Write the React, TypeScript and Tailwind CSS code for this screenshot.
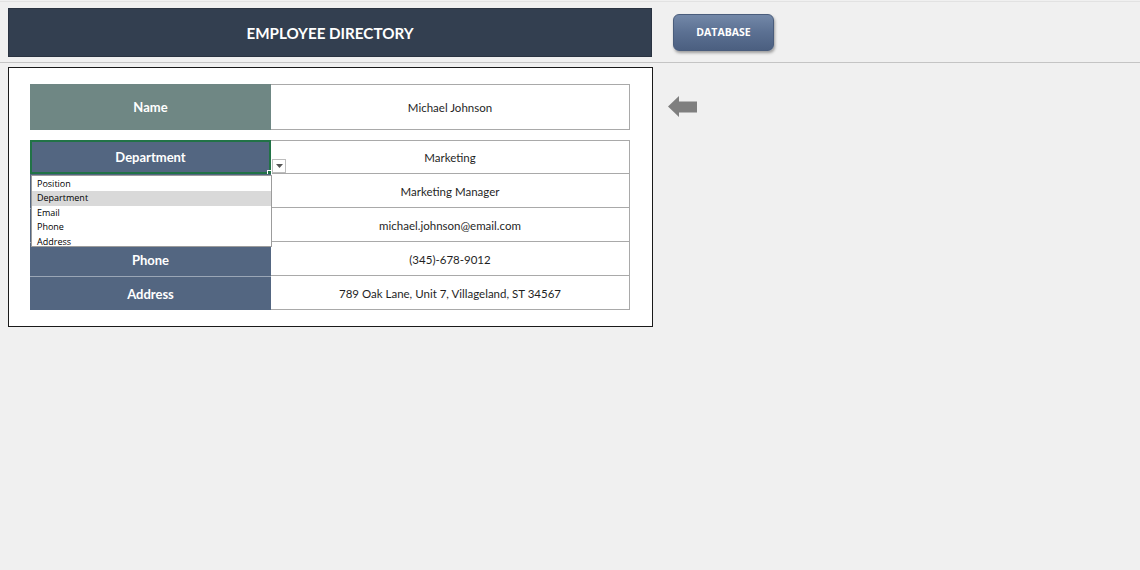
const rows = [
  { label: 'Department', value: 'Marketing' },
  { label: 'Position', value: 'Marketing Manager' },
  { label: 'Email', value: 'michael.johnson@email.com' },
  { label: 'Phone', value: '(345)-678-9012' },
  { label: 'Address', value: '789 Oak Lane, Unit 7, Villageland, ST 34567' },
]

const options = ['Position', 'Department', 'Email', 'Phone', 'Address']

export default function App() {
  return (
    <div className="relative h-[570px] w-[1140px] overflow-hidden bg-[#f0f0f0] font-['Lato',sans-serif] text-[#1f1f1f]">
      <div className="h-[2px] border-b border-[#e2e2e2]" />
      {/* top bar */}
      <div className="flex h-[61px] items-start border-b border-[#c4c4c4] pl-2 pt-[6px]">
        <div className="flex h-[49px] w-[644px] items-center justify-center border border-[#2a3341] bg-[#333f50]">
          <h1 className="pt-px text-[15.2px] font-bold text-white">EMPLOYEE DIRECTORY</h1>
        </div>
        <button
          type="button"
          className="ml-[21px] mt-[6px] flex h-[37px] w-[101px] items-center justify-center rounded-[6px] border border-[#4a5d7c] bg-gradient-to-b from-[#7388a8] via-[#5b7092] to-[#4b5f80] font-['Open_Sans',sans-serif] text-[10.5px] font-bold text-white shadow-[1px_2px_3px_rgba(0,0,0,0.35)]"
        >
          DATABASE
        </button>
      </div>

      <div className="flex items-start pl-2 pt-1">
        {/* main panel */}
        <div className="h-[260px] w-[645px] border border-[#1a1a1a] bg-white pl-[21px] pt-4">
          <div className="flex h-[46px] w-[600px]">
            <div className="flex w-[241px] items-center justify-center bg-[#6f8784] pt-[2px] text-[13px] font-bold text-white">
              Name
            </div>
            <div className="flex w-[359px] items-center justify-center border border-l-0 border-[#a9a9a9] pt-[2px] text-[11.5px]">
              Michael Johnson
            </div>
          </div>

          <div className="relative mt-[10px] w-[600px]">
            {rows.map((r, i) => (
              <div key={r.label} className="flex h-[34px]">
                <div
                  className={`relative flex w-[241px] items-center justify-center bg-[#536681] pt-[2px] text-[13px] font-bold text-white ${
                    i === 0 ? 'border-2 border-[#217346]' : i > 1 ? 'border-t border-[#9aa6b6]' : ''
                  }`}
                >
                  {r.label}
                  {i === 0 && (
                    <span className="absolute -bottom-[3px] -right-[3px] h-[5px] w-[5px] border border-white bg-[#217346]" />
                  )}
                </div>
                <div
                  className={`flex w-[359px] items-center justify-center border-r border-[#a9a9a9] pt-[2px] text-[11.5px] ${
                    i === 0 ? 'border-t' : ''
                  } border-b`}
                >
                  {r.value}
                </div>
              </div>
            ))}

            {/* dropdown arrow */}
            <div className="absolute left-[242px] top-[19px] flex h-[14px] w-[14px] items-center justify-center border border-[#bdbdbd] bg-white">
              <svg width="7" height="4" viewBox="0 0 7 4">
                <path d="M0 0h7L3.5 4z" fill="#555" />
              </svg>
            </div>

            {/* dropdown list */}
            <div className="absolute left-px top-[35px] h-[72px] w-[241px] border border-[#9c9c9c] bg-white py-px font-['Open_Sans',sans-serif] text-[9px] leading-[14.4px] text-black">
              {options.map((o) => (
                <div key={o} className={`pl-[5px] ${o === 'Department' ? 'bg-[#d9d9d9]' : ''}`}>
                  {o}
                </div>
              ))}
            </div>
          </div>
        </div>

        {/* pointer arrow */}
        <svg className="ml-[15px] mt-[29px]" width="30" height="22" viewBox="0 0 30 22">
          <path d="M0 10.5L11 0v5.5h18v11H11V21z" fill="#7f7f7f" />
        </svg>
      </div>
    </div>
  )
}
